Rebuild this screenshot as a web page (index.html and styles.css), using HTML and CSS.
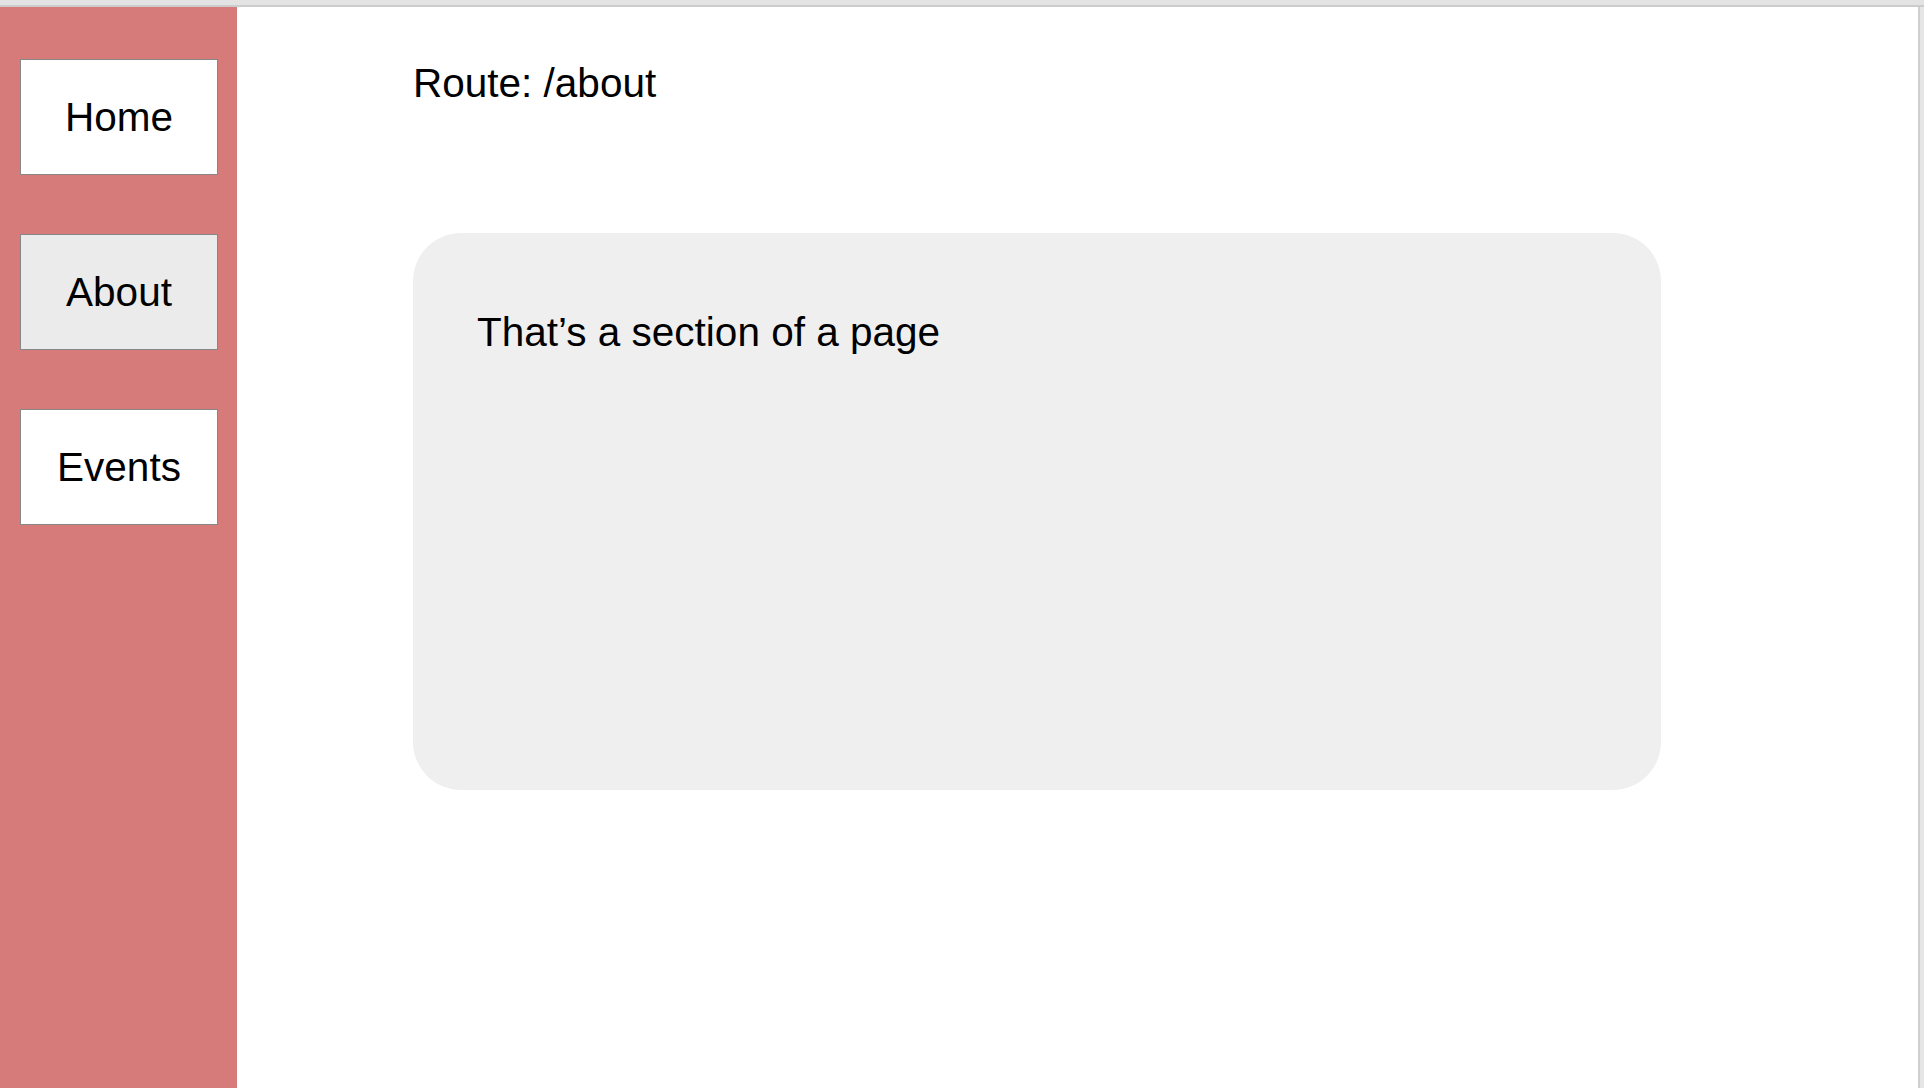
FILE: index.html
```html
<!DOCTYPE html>
<html lang="en">

<head>
    <meta charset="UTF-8">
    <meta name="viewport" content="width=device-width, initial-scale=1.0">
    <title>Router Demo</title>
    <link rel="stylesheet" href="styles.css">
</head>

<body>
    <div class="top-edge"></div>
    <div class="window">
        <nav class="sidebar">
            <button class="nav-button">Home</button>
            <button class="nav-button active">About</button>
            <button class="nav-button">Events</button>
        </nav>

        <main class="content">
            <div class="route">Route: /about</div>
            <section class="card">
                <p class="card-text">That’s a section of a page</p>
            </section>
        </main>

        <div class="side-edge"></div>
    </div>
</body>

</html>
```

FILE: styles.css
```css
html,
body {
    margin: 0;
    height: 100%;
}

body {
    display: flex;
    flex-direction: column;
    background-color: #ffffff;
    color: #000000;
    font-family: "Liberation Sans", Arial, sans-serif;
    overflow: hidden;
}

.top-edge {
    height: 5px;
    background-color: #e3e3e3;
    border-bottom: 2px solid #cccccc;
    flex-shrink: 0;
}

.window {
    flex: 1;
    display: flex;
    min-height: 0;
}

.sidebar {
    width: 237px;
    flex-shrink: 0;
    box-sizing: border-box;
    padding: 52px 0 0 20px;
    background-color: #d77a7a;
    display: flex;
    flex-direction: column;
    gap: 59px;
}

.nav-button {
    width: 198px;
    height: 116px;
    box-sizing: border-box;
    background-color: #ffffff;
    border: 1px solid #878787;
    border-radius: 0;
    padding: 0;
    font-family: inherit;
    font-size: 40.5px;
    color: #000000;
    cursor: pointer;
}

.nav-button.active {
    background-color: #ebebeb;
}

.content {
    flex: 1;
    padding: 53px 0 0 176px;
}

.route {
    font-size: 40.5px;
    line-height: 46px;
}

.card {
    width: 1248px;
    height: 557px;
    box-sizing: border-box;
    margin-top: 127px;
    padding: 76px 64px;
    background-color: #efefef;
    border-radius: 48px;
}

.card-text {
    margin: 0;
    font-size: 40.5px;
    line-height: 46px;
}

.side-edge {
    width: 4px;
    flex-shrink: 0;
    background-color: #e6e6e6;
    border-left: 2px solid #cfcfcf;
}
```
